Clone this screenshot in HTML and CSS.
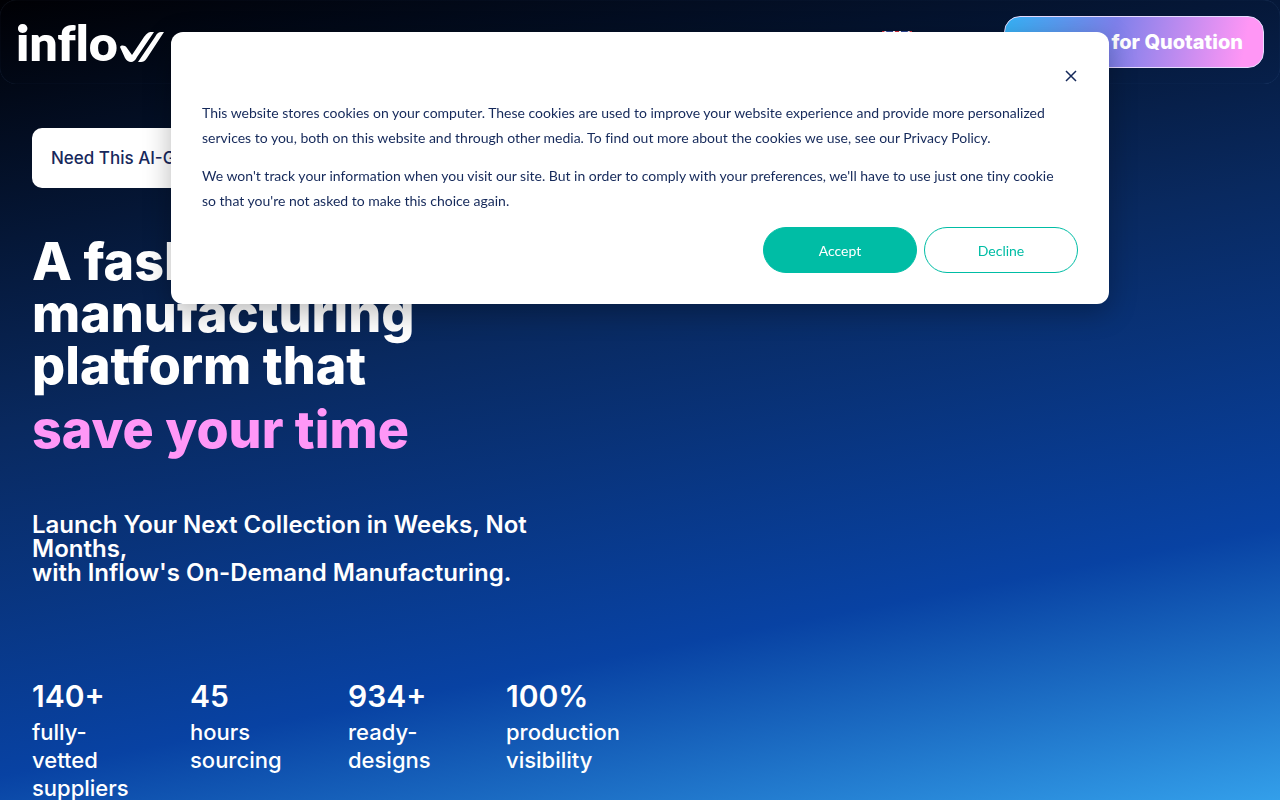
FILE: index.html
```html
<!DOCTYPE html>
<html lang="en">
<head>
  <meta charset="UTF-8">
  <meta name="viewport" content="width=device-width, initial-scale=1.0">
  <title>Inflow</title>
  <link rel="stylesheet" href="styles.css">
</head>
<body>

  <header class="header">
    <a class="logo" href="#" aria-label="inflow">
      <span class="logo-text">inflo</span>
      <svg class="logo-mark" width="46" height="32" viewBox="0 0 46 32" fill="#fff">
        <path d="M1 16 C2 14 6 14 8 17 L13 24 L25 6 C28 2 30 1 32 1 H35 L18 26 C15 33 9 32 6 27 Z"/>
        <path d="M19 31 L36 6 C38 2 40 1 42 1 H45 L28 27 C26 30 24 31 22 31 Z"/>
      </svg>
    </a>
    <div class="header-actions">
      <button class="lang" type="button" aria-label="English">
        <svg width="30" height="22" viewBox="0 0 30 22">
          <rect width="30" height="22" rx="2" fill="#2f4796"/>
          <path d="M0 0 L30 22 M30 0 L0 22" stroke="#fff" stroke-width="4"/>
          <path d="M0 0 L30 22 M30 0 L0 22" stroke="#d22f3d" stroke-width="2"/>
          <path d="M15 0 V22 M0 11 H30" stroke="#fff" stroke-width="8"/>
          <path d="M15 0 V22 M0 11 H30" stroke="#d22f3d" stroke-width="4"/>
        </svg>
      </button>
      <a class="quote-btn" href="#">Request for Quotation</a>
    </div>
  </header>

  <main class="hero">
    <a class="promo" href="#">Need This AI-Generated Design?</a>
    <h1>A fashion manufacturing platform that <span class="accent">save your time</span></h1>
    <p class="lead">Launch Your Next Collection in Weeks, Not Months,<br>with Inflow's On-Demand Manufacturing.</p>
    <ul class="stats">
      <li><strong>140+</strong>fully-vetted suppliers</li>
      <li><strong>45</strong>hours sourcing</li>
      <li><strong>934+</strong>ready-designs</li>
      <li><strong>100%</strong>production visibility</li>
    </ul>
  </main>

  <div class="cookie" role="dialog" aria-label="Cookie banner">
    <button class="cookie-close" type="button" aria-label="Close">
      <svg width="14" height="14" viewBox="0 0 14 14" stroke="#15295a" stroke-width="1.5">
        <path d="M2 2 L12 12 M12 2 L2 12"/>
      </svg>
    </button>
    <p>This website stores cookies on your computer. These cookies are used to improve your website experience and provide more personalized services to you, both on this website and through other media. To find out more about the cookies we use, see our Privacy Policy.</p>
    <p>We won't track your information when you visit our site. But in order to comply with your preferences, we'll have to use just one tiny cookie so that you're not asked to make this choice again.</p>
    <div class="cookie-buttons">
      <button class="btn btn-accept" type="button">Accept</button>
      <button class="btn btn-decline" type="button">Decline</button>
    </div>
  </div>

</body>
</html>
```
FILE: styles.css
```css
/* Global styles */
* {
  margin: 0;
  padding: 0;
  box-sizing: border-box;
}

body {
  min-height: 100vh;
  background: linear-gradient(169deg, #000004 0%, #09295f 41%, #0842a3 74%, #339fea 100%) fixed;
  color: #fff;
  font-family: 'Inter', sans-serif;
}

a {
  color: inherit;
  text-decoration: none;
}

/* Header */
.header {
  display: flex;
  justify-content: space-between;
  align-items: center;
  height: 84px;
  padding: 0 16px;
  border-radius: 16px;
  box-shadow: inset 0 0 1px rgba(120, 160, 220, 0.3);
}

.logo {
  display: flex;
  align-items: flex-end;
  gap: 1px;
}

.logo-text {
  font-family: 'Lato', sans-serif;
  font-size: 50px;
  font-weight: 800;
  font-variant-ligatures: none;
  line-height: 42px;
}

.header-actions {
  display: flex;
  align-items: center;
  gap: 92px;
}

.lang {
  display: flex;
  background: none;
  border: none;
  cursor: pointer;
}

.quote-btn {
  width: 260px;
  padding: 0 20px;
  border: 1px solid #e6dcff;
  border-radius: 16px;
  background: linear-gradient(100deg, #36b3f7 0%, #7e80ea 42%, #ff96f5 92%);
  font-size: 20px;
  font-weight: 800;
  line-height: 50px;
  text-align: right;
  white-space: nowrap;
}

/* Hero */
.hero {
  max-width: 632px;
  padding: 44px 32px 0;
}

.promo {
  display: block;
  width: 400px;
  padding: 0 19px;
  border-radius: 10px;
  background: #fff;
  color: #17285c;
  font-size: 17px;
  font-weight: 500;
  line-height: 60px;
}

h1 {
  max-width: 440px;
  margin-top: 48px;
  font-size: 52px;
  font-weight: 800;
  line-height: 52px;
}

.accent {
  display: block;
  margin-top: 12px;
  color: #ff97f7;
}

.lead {
  margin-top: 57px;
  font-size: 24px;
  font-weight: 600;
  line-height: 24px;
}

.stats {
  display: grid;
  grid-template-columns: repeat(4, 1fr);
  gap: 64px;
  margin-top: 93px;
  list-style: none;
  font-size: 22px;
  font-weight: 500;
  line-height: 28px;
}

.stats li {
  min-width: 0;
}

.stats strong {
  display: block;
  margin-bottom: 4px;
  font-size: 30px;
  font-weight: 600;
  line-height: 36px;
}

/* Cookie banner */
.cookie {
  position: fixed;
  top: 32px;
  left: 0;
  right: 0;
  display: flex;
  flex-direction: column;
  gap: 13px;
  max-width: 938px;
  margin: 0 auto;
  padding: 31px;
  border-radius: 12px;
  background: #fff;
  box-shadow: 0 8px 28px rgba(0, 0, 0, 0.28);
  color: #15295a;
  font-family: 'Lato', sans-serif;
  font-size: 14px;
  font-variant-ligatures: none;
  line-height: 25px;
}

.cookie p {
  padding-right: 12px;
}

.cookie-close {
  display: flex;
  align-self: flex-end;
  padding: 6px 0 4px;
  background: none;
  border: none;
  cursor: pointer;
}

.cookie-buttons {
  display: flex;
  justify-content: flex-end;
  gap: 7px;
  padding-top: 1px;
}

.btn {
  width: 154px;
  height: 46px;
  border: 1px solid #00bda5;
  border-radius: 23px;
  font-family: inherit;
  font-size: 14px;
  cursor: pointer;
}

.btn-accept {
  background: #00bda5;
  color: #fff;
}

.btn-decline {
  background: #fff;
  color: #00bda5;
}

@media (max-width: 768px) {
  .header-actions {
    gap: 16px;
  }

  .stats {
    grid-template-columns: repeat(2, 1fr);
  }
}
```
